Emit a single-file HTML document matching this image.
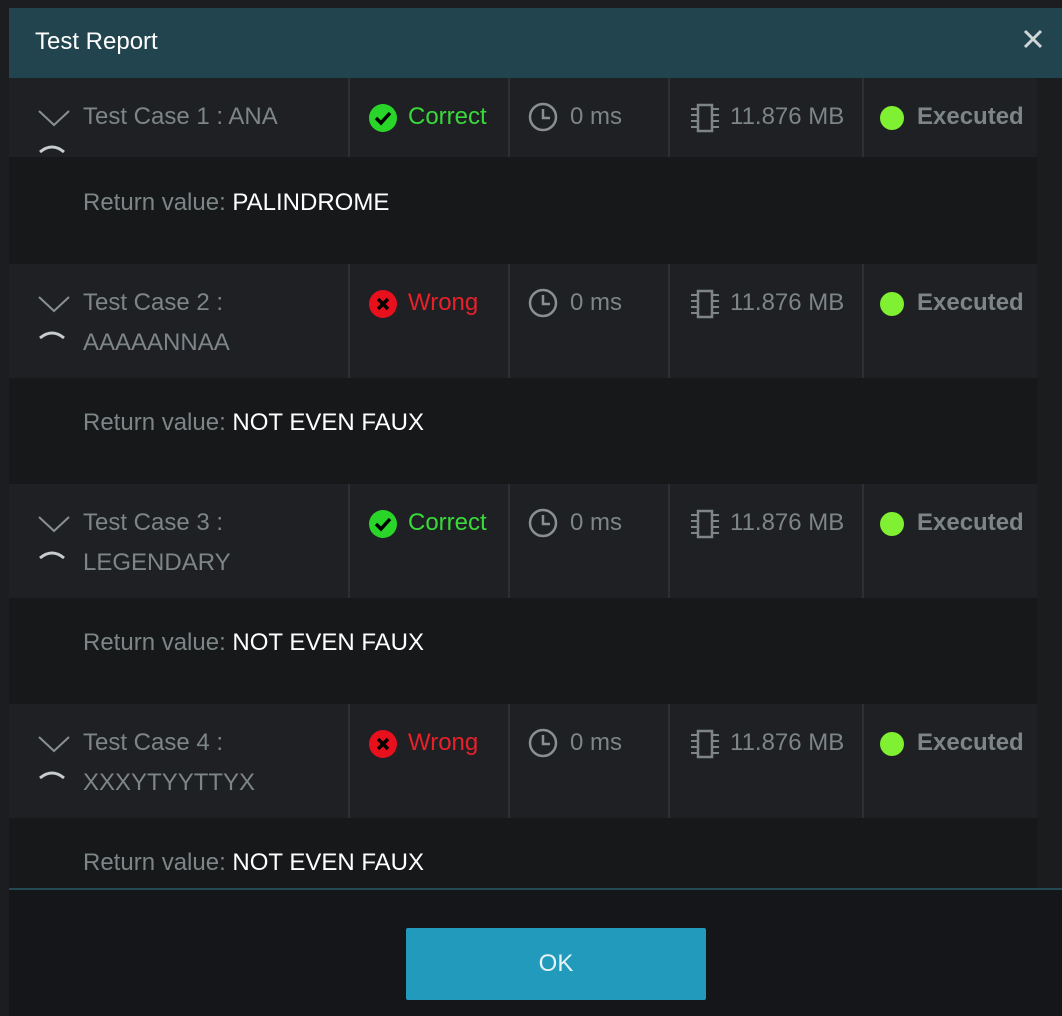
<!DOCTYPE html>
<html><head><style>
*{margin:0;padding:0;box-sizing:border-box}
body{width:1062px;height:1016px;background:#1b1d20;position:relative;overflow:hidden;font-family:"Liberation Sans",sans-serif}
.dlg{position:absolute;left:9px;top:8px;width:1053px;height:1008px;background:#141619}
.hdr{position:absolute;left:9px;top:8px;width:1053px;height:70px;background:#21444e}
.hdr span{position:absolute;left:26px;top:20px;color:#fff;font-size:24px}
.x{position:absolute;left:1012px;top:19px}
.row{position:absolute;left:9px;width:1028px;background:#1e2023}
.ret{position:absolute;left:9px;width:1028px;background:#17181a}
.t{position:absolute;font-size:24px;color:#7d8587;white-space:nowrap}
.v{color:#fff}
.div{position:absolute;top:0;bottom:0;width:2px;background:#2c2f33}
.sb{position:absolute;left:1037px;top:78px;width:25px;height:810px;background:#1a1c1e}
.ok{position:absolute;left:406px;top:928px;width:300px;height:72px;background:#219abb;border-radius:2px;color:#e6f3f7;font-size:24px;text-align:center;line-height:72px}
.line{position:absolute;left:9px;top:888px;width:1053px;height:2px;background:#214a55}
</style></head><body>
<div class="dlg"></div>
<div class="hdr"><span>Test Report</span>
<svg class="x" width="24" height="24" viewBox="0 0 24 24"><path d="M4 4L20 20M20 4L4 20" stroke="#cfd6d8" stroke-width="3"/></svg></div>
<div class="sb"></div>

<div class="row" style="top:78px;height:79px;overflow:hidden" id="r1"></div>
<div class="ret" style="top:157px;height:107px"><div class="t" style="left:74px;top:32px">Return value: <span class="v">PALINDROME</span></div></div>
<div class="row" style="top:264px;height:114px" id="r2"></div>
<div class="ret" style="top:378px;height:106px"><div class="t" style="left:74px;top:31px">Return value: <span class="v">NOT EVEN FAUX</span></div></div>
<div class="row" style="top:484px;height:114px" id="r3"></div>
<div class="ret" style="top:598px;height:106px"><div class="t" style="left:74px;top:31px">Return value: <span class="v">NOT EVEN FAUX</span></div></div>
<div class="row" style="top:704px;height:114px" id="r4"></div>
<div class="ret" style="top:818px;height:70px"><div class="t" style="left:74px;top:31px">Return value: <span class="v">NOT EVEN FAUX</span></div></div>
<div class="line"></div>
<div class="ok">OK</div>

<script>
const data=[["r1","Test Case 1 : ANA","",1],["r2","Test Case 2 :","AAAAANNAA",0],["r3","Test Case 3 :","LEGENDARY",1],["r4","Test Case 4 :","XXXYTYYTTYX",0]];
for(const [id,a,b,ok] of data){
 const st=ok?'<circle cx="15" cy="15" r="14" fill="#2ad52a"/><path d="M8 15l5 5 9-10" stroke="#000" stroke-width="3.5" fill="none"/>':'<circle cx="15" cy="15" r="14" fill="#e8101c"/><path d="M10 10l10 10M20 10l-10 10" stroke="#000" stroke-width="3.5"/>';
 document.getElementById(id).innerHTML=
 '<svg style="position:absolute;left:28px;top:30px" width="34" height="48" viewBox="0 0 34 48"><path d="M2 3l15 14 15-14" stroke="#8a9092" stroke-width="2" fill="none"/><path d="M3 44q12-10 24 0" stroke="#c8cccd" stroke-width="3" fill="none"/></svg>'+
 '<div class="t" style="left:74px;top:25px">'+a+'</div>'+(b?'<div class="t" style="left:74px;top:65px">'+b+'</div>':'')+
 '<div class="div" style="left:339px"></div><div class="div" style="left:499px"></div><div class="div" style="left:659px"></div><div class="div" style="left:853px"></div>'+
 '<svg style="position:absolute;left:359px;top:25px" width="30" height="30">'+st+'</svg>'+
 '<div class="t" style="left:399px;top:25px;color:'+(ok?'#39d93a':'#e8202a')+'">'+(ok?'Correct':'Wrong')+'</div>'+
 '<svg style="position:absolute;left:518px;top:24px" width="32" height="32"><circle cx="16" cy="15" r="13" stroke="#8a8f91" stroke-width="2.5" fill="none"/><path d="M16 7v9h7" stroke="#8a8f91" stroke-width="2.5" fill="none"/></svg>'+
 '<div class="t" style="left:561px;top:25px">0 ms</div>'+
 '<svg style="position:absolute;left:680px;top:24px" width="32" height="32" viewBox="0 0 32 32"><rect x="9" y="3" width="14" height="26" stroke="#7d8587" stroke-width="2.5" fill="none"/><path d="M2 7h7M2 13h7M2 19h7M2 25h7M23 7h7M23 13h7M23 19h7M23 25h7" stroke="#7d8587" stroke-width="2"/></svg>'+
 '<div class="t" style="left:721px;top:25px">11.876 MB</div>'+
 '<svg style="position:absolute;left:870px;top:27px" width="26" height="26"><circle cx="13" cy="13" r="12" fill="#80f032"/></svg>'+
 '<div class="t" style="left:908px;top:25px;font-weight:bold">Executed</div>';
}
</script>
</body></html>
